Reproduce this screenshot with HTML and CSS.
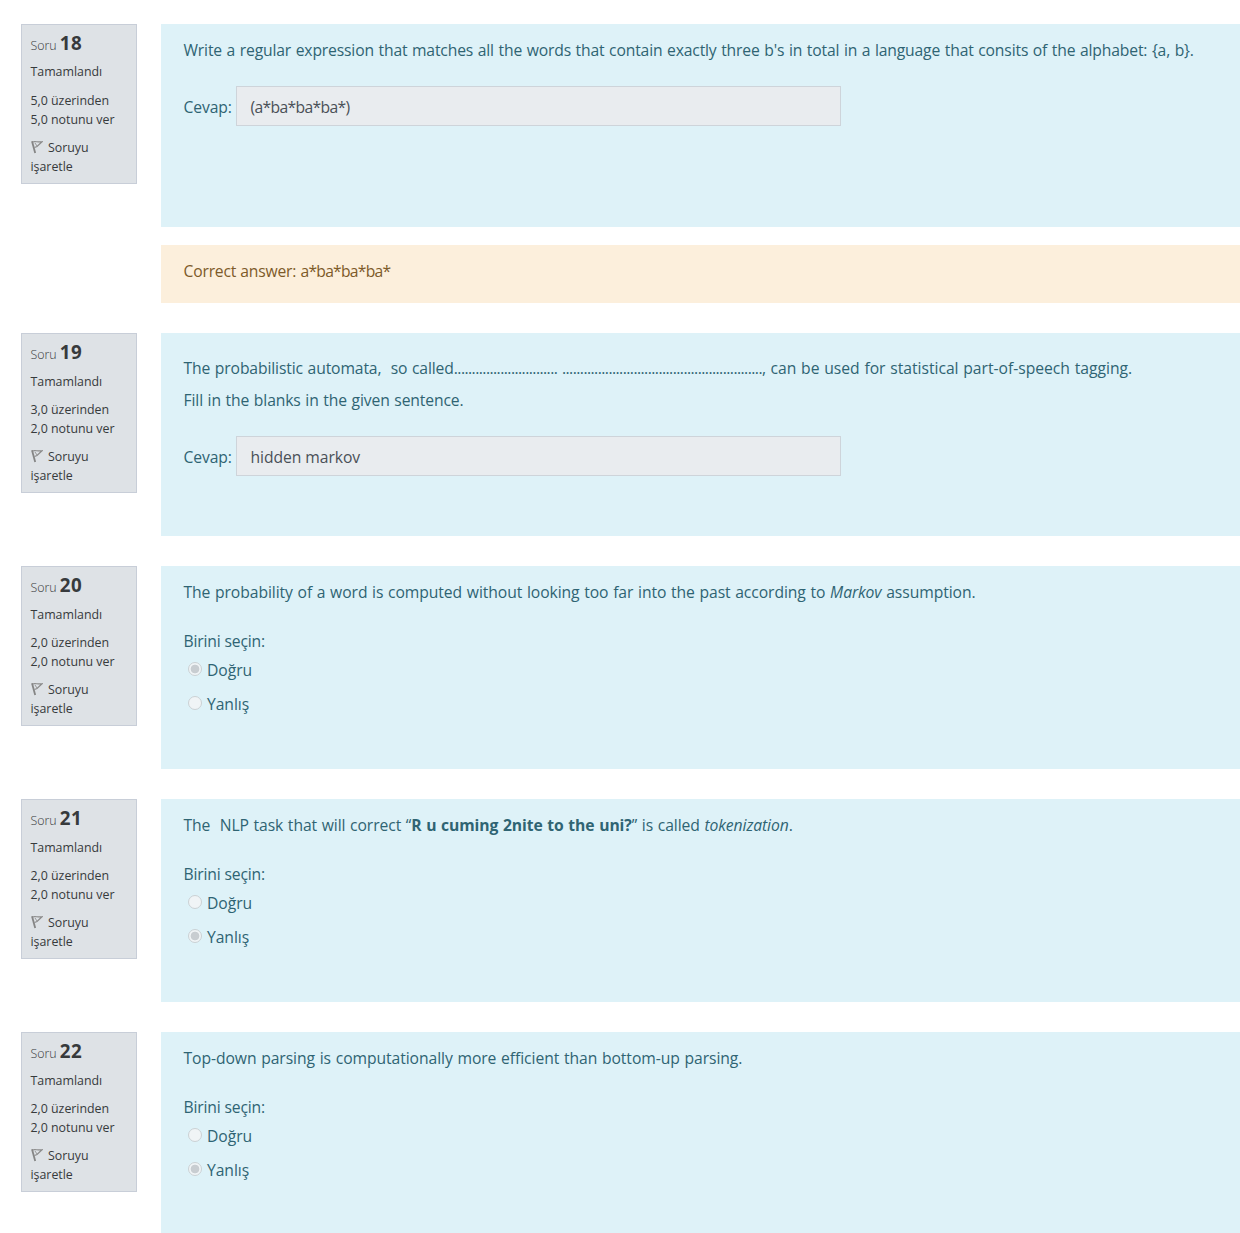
FILE: index.html
```html
<!DOCTYPE html>
<html lang="tr">
<head>
<meta charset="utf-8">
<title>Sınav</title>
<link rel="stylesheet" href="styles.css">
</head>
<body>
<svg width="0" height="0" class="defs"><symbol id="flag" viewBox="0 0 12 14"><path d="M1.500 2C4 .8 6.500 2.500 11 1.800L6 6.500 3.500 7.500" fill="none" stroke="#8c8c8c" stroke-width="1.200"/><path d="M1 1.300 4.200 13" stroke="#858585" stroke-width="1.800"/><path d="M4 3 6 6" stroke="#999" stroke-width="1"/></symbol></svg>
<main class="quiz">
  <section class="question">
    <aside class="info"><h3>Soru <b>18</b></h3><p class="state">Tamamlandı</p><p class="grade"><span>5,0 üzerinden</span><br><span>5,0 notunu ver</span></p><p class="mark"><svg class="flag"><use href="#flag"/></svg>Soruyu<br>işaretle</p></aside>
    <div class="content">
      <div class="formulation"><p class="text q18">Write a regular expression that matches all the words that contain exactly three b's in total in a language that consits of the alphabet: {a, b}.</p>
        <div class="answer"><label>Cevap:</label><div class="field"><span class="regex">(a*ba*ba*ba*)</span></div></div></div>
      <div class="feedback">Correct answer: <span class="regex">a*ba*ba*ba*</span></div>
    </div>
  </section>
  <section class="question">
    <aside class="info"><h3>Soru <b>19</b></h3><p class="state">Tamamlandı</p><p class="grade"><span>3,0 üzerinden</span><br><span>2,0 notunu ver</span></p><p class="mark"><svg class="flag"><use href="#flag"/></svg>Soruyu<br>işaretle</p></aside>
    <div class="content">
      <div class="formulation spaced"><p class="text q19">The probabilistic automata,&nbsp; so called<span class="dots">.............................</span> <span class="dots">........................................................</span>, <span class="tail">can be used for statistical part-of-speech tagging.</span></p>
        <p class="text fill">Fill in the blanks in the given sentence.</p>
        <div class="answer"><label>Cevap:</label><div class="field plain">hidden markov</div></div></div>
    </div>
  </section>
  <section class="question">
    <aside class="info"><h3>Soru <b>20</b></h3><p class="state">Tamamlandı</p><p class="grade"><span>2,0 üzerinden</span><br><span>2,0 notunu ver</span></p><p class="mark"><svg class="flag"><use href="#flag"/></svg>Soruyu<br>işaretle</p></aside>
    <div class="content">
      <div class="formulation"><p class="text q20">The probability of a word is computed without looking too far into the past according to <i>Markov</i> assumption.</p>
        <p class="prompt">Birini seçin:</p><div class="choice"><span class="radio on"></span>Doğru</div><div class="choice"><span class="radio"></span>Yanlış</div></div>
    </div>
  </section>
  <section class="question">
    <aside class="info"><h3>Soru <b>21</b></h3><p class="state">Tamamlandı</p><p class="grade"><span>2,0 üzerinden</span><br><span>2,0 notunu ver</span></p><p class="mark"><svg class="flag"><use href="#flag"/></svg>Soruyu<br>işaretle</p></aside>
    <div class="content">
      <div class="formulation"><p class="text q21">The&nbsp; NLP task that will correct “<b>R u cuming 2nite to the uni?</b>” is called <i>tokenization</i>.</p>
        <p class="prompt">Birini seçin:</p><div class="choice"><span class="radio"></span>Doğru</div><div class="choice"><span class="radio on"></span>Yanlış</div></div>
    </div>
  </section>
  <section class="question">
    <aside class="info"><h3>Soru <b>22</b></h3><p class="state">Tamamlandı</p><p class="grade"><span>2,0 üzerinden</span><br><span>2,0 notunu ver</span></p><p class="mark"><svg class="flag"><use href="#flag"/></svg>Soruyu<br>işaretle</p></aside>
    <div class="content">
      <div class="formulation"><p class="text q22">Top-down parsing is computationally more efficient than bottom-up parsing.</p>
        <p class="prompt">Birini seçin:</p><div class="choice"><span class="radio"></span>Doğru</div><div class="choice"><span class="radio on"></span>Yanlış</div></div>
    </div>
  </section>
</main>
</body>
</html>
```
FILE: styles.css
```css
* { box-sizing: border-box; }
body { margin: 0; background: #fff; font-family: "Open Sans", "Noto Sans", sans-serif; font-size: 15.7px; letter-spacing: -0.2px; }
p, h3 { margin: 0; }
.defs { display: block; height: 0; }
.quiz { display: flex; flex-direction: column; gap: 30px; padding: 24px 0 0 21px; }
.question { display: flex; align-items: flex-start; gap: 24px; }
.info { flex: 0 0 116px; height: 160px; padding: 6px 0 0 8.5px; border: 1px solid #c8ced8; background: #dee2e6; color: #373a3c; font-size: 12.4px; line-height: 19px; letter-spacing: -0.02px; white-space: nowrap; }
.info h3 { height: 25px; font-size: 12.4px; font-weight: 300; line-height: 24px; }
.info h3 b { font-size: 18.8px; font-weight: 700; letter-spacing: 0.4px; }
.state { margin-top: 6px; }
.grade { margin-top: 10px; }
.question + .question .state { margin-top: 7px; }
.question + .question .grade { margin-top: 9px; }
.mark { margin-top: 9px; }
.flag { width: 12px; height: 14px; margin-right: 5.5px; vertical-align: -2px; }
.content { flex: 1; display: flex; flex-direction: column; gap: 18px; }
.formulation { height: 203px; padding: 13px 0 0 22.5px; background: #def2f8; color: #2f6473; }
.formulation.spaced { padding-top: 22px; }
.text { height: 24px; line-height: 26px; white-space: nowrap; word-spacing: 0.7px; }
.fill { margin-top: 8px; letter-spacing: -0.13px; }
.q18 { letter-spacing: -0.16px; }
.q19 { letter-spacing: -0.13px; }
.q20 { letter-spacing: -0.08px; }
.q21 { letter-spacing: -0.09px; }
.q22 { letter-spacing: -0.07px; }
.dots { letter-spacing: -0.55px; }
.tail { letter-spacing: -0.02px; }
.answer { display: flex; align-items: center; gap: 4px; margin-top: 25px; }
.answer label { width: 48.5px; line-height: 24px; padding-top: 2px; letter-spacing: -0.13px; }
.field { width: 605px; height: 40px; padding: 1px 14px 0 13.5px; border: 1px solid #ced4da; background: #e9ecef; color: #495057; line-height: 38px; }
.field.plain { letter-spacing: -0.07px; }
.spaced .answer { margin-top: 25px; }
.feedback { height: 58px; padding: 13px 0 0 22.5px; background: #fcefdc; color: #7d5a29; line-height: 26px; word-spacing: 0.3px; }
.regex { letter-spacing: -0.65px; }
.feedback .regex { letter-spacing: -0.75px; }
.prompt { margin-top: 25px; line-height: 26px; letter-spacing: -0.17px; }
.choice { display: flex; align-items: center; height: 25px; margin: 3px 0 9px 4.5px; padding-top: 1px; letter-spacing: -0.06px; }
.radio { width: 14px; height: 14px; margin: -3px 5px 0 0; border: 1px solid #cbd1d4; border-radius: 50%; background: #f0f4f6; }
.radio.on { background: radial-gradient(circle, #c8cdd1 0 4px, #f0f4f6 4.700px); }
```
